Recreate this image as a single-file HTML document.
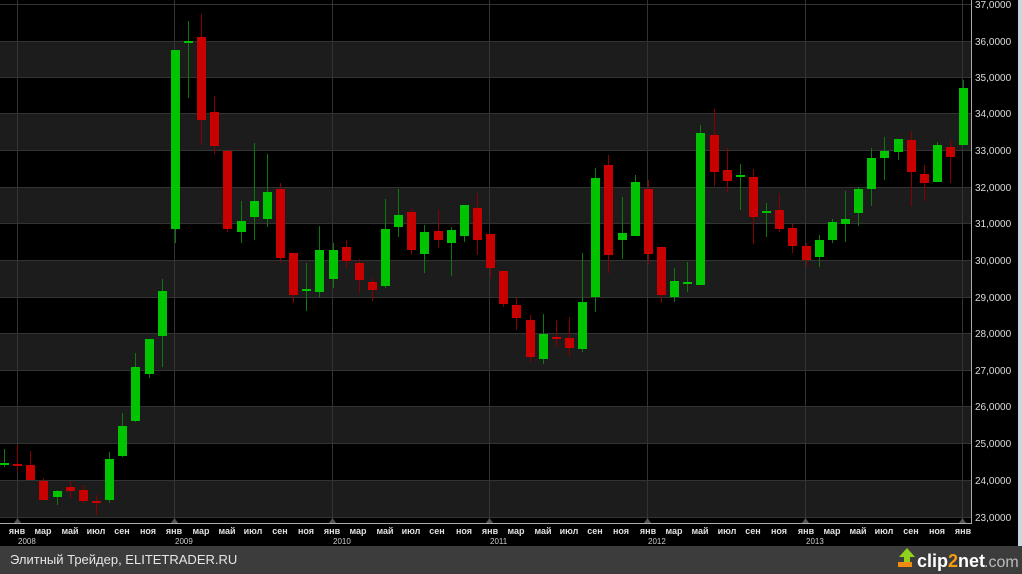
<!DOCTYPE html>
<html><head><meta charset="utf-8"><style>
html,body{margin:0;padding:0;background:#000;width:1022px;height:574px;overflow:hidden;font-family:"Liberation Sans",sans-serif}
svg{display:block}
</style></head><body>
<svg width="1022" height="574" xmlns="http://www.w3.org/2000/svg" font-family="Liberation Sans, sans-serif">
<rect x="0" y="0" width="1022" height="574" fill="#000"/>
<g fill="#1c1c1c">
<rect x="0" y="41" width="971" height="36"/><rect x="0" y="113" width="971" height="37"/>
<rect x="0" y="187" width="971" height="36"/><rect x="0" y="260" width="971" height="37"/>
<rect x="0" y="333" width="971" height="37"/><rect x="0" y="406" width="971" height="37"/>
<rect x="0" y="480" width="971" height="37"/>
</g>
<g stroke="#333" stroke-width="1">
<line x1="0" y1="4.5" x2="971" y2="4.5"/><line x1="0" y1="41.5" x2="971" y2="41.5"/><line x1="0" y1="77.5" x2="971" y2="77.5"/><line x1="0" y1="113.5" x2="971" y2="113.5"/><line x1="0" y1="150.5" x2="971" y2="150.5"/><line x1="0" y1="187.5" x2="971" y2="187.5"/><line x1="0" y1="223.5" x2="971" y2="223.5"/><line x1="0" y1="260.5" x2="971" y2="260.5"/><line x1="0" y1="297.5" x2="971" y2="297.5"/><line x1="0" y1="333.5" x2="971" y2="333.5"/><line x1="0" y1="370.5" x2="971" y2="370.5"/><line x1="0" y1="406.5" x2="971" y2="406.5"/><line x1="0" y1="443.5" x2="971" y2="443.5"/><line x1="0" y1="480.5" x2="971" y2="480.5"/><line x1="0" y1="517.5" x2="971" y2="517.5"/>
<line x1="17.5" y1="0" x2="17.5" y2="522"/><line x1="174.5" y1="0" x2="174.5" y2="522"/><line x1="332.5" y1="0" x2="332.5" y2="522"/><line x1="489.5" y1="0" x2="489.5" y2="522"/><line x1="647.5" y1="0" x2="647.5" y2="522"/><line x1="805.5" y1="0" x2="805.5" y2="522"/><line x1="962.5" y1="0" x2="962.5" y2="522"/>
</g>
<g fill="#555">
<polygon points="17.5,518 14,523 21,523"/><polygon points="174.5,518 171,523 178,523"/><polygon points="332.5,518 329,523 336,523"/><polygon points="489.5,518 486,523 493,523"/><polygon points="647.5,518 644,523 651,523"/><polygon points="805.5,518 802,523 809,523"/><polygon points="962.5,518 959,523 966,523"/>
</g>
<g id="candles"></g>
<line x1="971.5" y1="0" x2="971.5" y2="523" stroke="#aaa"/>
<line x1="0" y1="523.5" x2="972" y2="523.5" stroke="#aaa"/>
<rect x="1018" y="0" width="4" height="546" fill="#c9d5e2"/>
<g fill="#ddd" font-size="10">
<text x="975" y="8">37,0000</text><text x="975" y="45">36,0000</text><text x="975" y="81">35,0000</text><text x="975" y="117">34,0000</text><text x="975" y="154">33,0000</text><text x="975" y="191">32,0000</text><text x="975" y="227">31,0000</text><text x="975" y="264">30,0000</text><text x="975" y="301">29,0000</text><text x="975" y="337">28,0000</text><text x="975" y="374">27,0000</text><text x="975" y="410">26,0000</text><text x="975" y="447">25,0000</text><text x="975" y="484">24,0000</text><text x="975" y="521">23,0000</text>
</g>
<g fill="#e0e0e0" font-size="9" font-weight="bold" text-anchor="middle">
<text x="17" y="534">янв</text><text x="43" y="534">мар</text><text x="70" y="534">май</text><text x="96" y="534">июл</text><text x="122" y="534">сен</text><text x="148" y="534">ноя</text>
<text x="174" y="534">янв</text><text x="201" y="534">мар</text><text x="227" y="534">май</text><text x="253" y="534">июл</text><text x="280" y="534">сен</text><text x="306" y="534">ноя</text>
<text x="332" y="534">янв</text><text x="358" y="534">мар</text><text x="385" y="534">май</text><text x="411" y="534">июл</text><text x="437" y="534">сен</text><text x="464" y="534">ноя</text>
<text x="490" y="534">янв</text><text x="516" y="534">мар</text><text x="543" y="534">май</text><text x="569" y="534">июл</text><text x="595" y="534">сен</text><text x="621" y="534">ноя</text>
<text x="648" y="534">янв</text><text x="674" y="534">мар</text><text x="700" y="534">май</text><text x="727" y="534">июл</text><text x="753" y="534">сен</text><text x="779" y="534">ноя</text>
<text x="806" y="534">янв</text><text x="832" y="534">мар</text><text x="858" y="534">май</text><text x="884" y="534">июл</text><text x="911" y="534">сен</text><text x="937" y="534">ноя</text>
<text x="963" y="534">янв</text>
</g>
<g fill="#ccc" font-size="8">
<text x="18" y="544">2008</text><text x="175" y="544">2009</text><text x="333" y="544">2010</text><text x="490" y="544">2011</text><text x="648" y="544">2012</text><text x="806" y="544">2013</text>
</g>
<rect x="0" y="546" width="1022" height="28" fill="#3c3c3c"/>
<text x="10" y="564" fill="#e6e6e6" font-size="13">Элитный Трейдер, ELITETRADER.RU</text>
<g>
<polygon points="907,548 899,557 904,557 904,563 910,563 910,557 915,557" fill="#8fd21c"/>
<rect x="898" y="562" width="14" height="5" fill="#f08a10"/>
<text x="917" y="567" fill="#fff" font-size="18" font-weight="bold">clip<tspan fill="#f39c12">2</tspan>net</text>
<text x="984" y="567" fill="#bbb" font-size="16">.com</text>
</g>
</svg>
<script>
var d=[[463,463,449,467,'g'],[464,465,445,472,'r'],[465,480,451,480,'r'],[481,500,478,500,'r'],[491,497,490,505,'g'],[487,491,481,498,'r'],[490,501,485,503,'r'],[501,503,495,515,'r'],[459,500,452,503,'g'],[426,456,413,457,'g'],[367,421,353,422,'g'],[339,374,339,378,'g'],[291,336,279,367,'g'],[50,229,50,243,'g'],[41,43,21,98,'g'],[37,120,14,145,'r'],[112,146,96,154,'r'],[151,229,151,232,'r'],[221,232,201,243,'g'],[201,217,143,240,'g'],[192,219,154,227,'g'],[189,258,183,263,'r'],[253,295,253,303,'r'],[289,291,263,311,'g'],[250,292,226,297,'g'],[250,279,243,288,'g'],[247,261,240,268,'r'],[263,280,259,293,'r'],[282,290,278,301,'r'],[229,286,199,288,'g'],[215,227,189,237,'g'],[212,250,209,255,'r'],[232,254,225,273,'g'],[231,240,210,248,'r'],[230,243,227,276,'g'],[205,236,205,242,'g'],[208,240,193,255,'r'],[234,268,234,278,'r'],[271,304,271,307,'r'],[305,318,298,330,'r'],[320,357,315,362,'r'],[334,359,314,364,'g'],[337,339,320,347,'r'],[338,348,317,356,'r'],[302,349,253,352,'g'],[178,297,168,312,'g'],[165,255,155,273,'r'],[233,240,197,259,'g'],[182,236,175,236,'g'],[189,254,180,264,'r'],[247,295,247,303,'r'],[281,297,268,302,'g'],[282,284,262,292,'g'],[133,285,125,285,'g'],[135,172,109,186,'r'],[170,181,148,192,'r'],[175,177,164,210,'g'],[177,217,169,244,'r'],[211,213,203,237,'g'],[210,229,194,232,'r'],[228,246,224,253,'r'],[246,260,243,267,'r'],[240,257,235,267,'g'],[222,240,219,243,'g'],[219,224,191,242,'g'],[189,213,187,226,'g'],[158,189,148,206,'g'],[151,158,137,180,'g'],[139,152,139,160,'g'],[140,172,131,206,'r'],[174,183,165,201,'r'],[145,182,142,182,'g'],[147,157,140,183,'r'],[88,145,80,145,'g']];
var s='';
d.forEach(function(c,i){var x=Math.round(4+13.14*i);var col=c[4]=='g'?'#00c400':'#c80000';var wc=c[4]=='g'?'#0a7a0a':'#8a0000';
s+='<line x1="'+(x+0.5)+'" y1="'+c[2]+'" x2="'+(x+0.5)+'" y2="'+c[3]+'" stroke="'+wc+'" stroke-width="1"/>';
var h=Math.max(c[1]-c[0],2);s+='<rect x="'+(x-4)+'" y="'+c[0]+'" width="9" height="'+h+'" fill="'+col+'"/>';});
document.getElementById('candles').innerHTML=s;
</script>
</body></html>
